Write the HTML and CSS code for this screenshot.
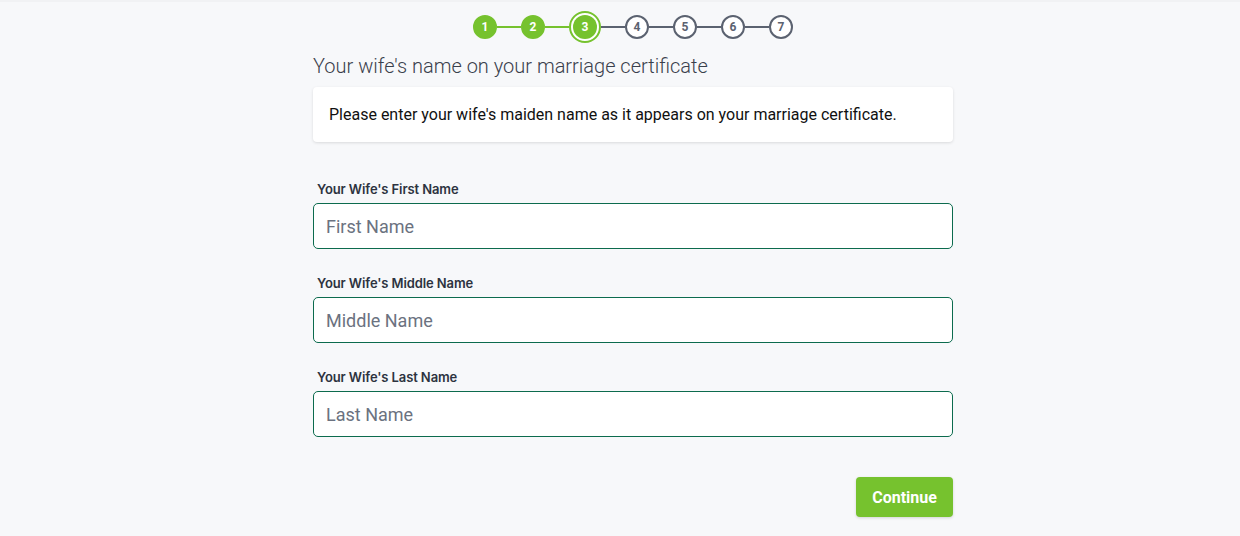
FILE: index.html
```html
<!DOCTYPE html>
<html lang="en">
<head>
    <meta charset="UTF-8">
    <meta name="viewport" content="width=device-width, initial-scale=1.0">
    <title>Marriage Certificate</title>
    <link rel="stylesheet" href="styles.css">
</head>
<body>
    <div class="page">
        <div class="wrap">
            <div class="stepper">
                <span class="step done">1</span>
                <span class="line done"></span>
                <span class="step done">2</span>
                <span class="line done"></span>
                <span class="step current"><span>3</span></span>
                <span class="line"></span>
                <span class="step">4</span>
                <span class="line"></span>
                <span class="step">5</span>
                <span class="line"></span>
                <span class="step">6</span>
                <span class="line"></span>
                <span class="step">7</span>
            </div>

            <h1 class="title">Your wife's name on your marriage certificate</h1>

            <div class="info">
                Please enter your wife's maiden name as it appears on your marriage certificate.
            </div>

            <form class="name-form">
                <div class="field">
                    <label for="first">Your Wife's First Name</label>
                    <input type="text" id="first" placeholder="First Name">
                </div>
                <div class="field">
                    <label for="middle">Your Wife's Middle Name</label>
                    <input type="text" id="middle" placeholder="Middle Name">
                </div>
                <div class="field">
                    <label for="last">Your Wife's Last Name</label>
                    <input type="text" id="last" placeholder="Last Name">
                </div>
                <div class="actions">
                    <button type="submit">Continue</button>
                </div>
            </form>
        </div>
    </div>
</body>
</html>
```

FILE: styles.css
```css
* {
    box-sizing: border-box;
}

body {
    margin: 0;
    padding: 0;
    background-color: #f7f8fa;
    font-family: Roboto, "Liberation Sans", Arial, sans-serif;
    color: #1a1a1a;
    height: 536px;
    overflow: hidden;
}

.page {
    display: flex;
    justify-content: center;
    padding-left: 26px;
    border-top: 2px solid #f1f2f4;
}

.wrap {
    width: 640px;
}

.stepper {
    display: flex;
    align-items: center;
    justify-content: center;
    margin-top: 9px;
    height: 32px;
}

.step {
    width: 24px;
    height: 24px;
    border-radius: 50%;
    border: 2px solid #5b6270;
    background-color: #fff;
    color: #5b6270;
    font-size: 12px;
    font-weight: 700;
    display: flex;
    align-items: center;
    justify-content: center;
}

.step.done {
    background-color: #76c22e;
    border-color: #76c22e;
    color: #fff;
}

.step.current {
    width: 32px;
    height: 32px;
    border: 2px solid #76c22e;
    background-color: #fff;
}

.step.current span {
    width: 24px;
    height: 24px;
    border-radius: 50%;
    background-color: #76c22e;
    color: #fff;
    display: flex;
    align-items: center;
    justify-content: center;
}

.line {
    width: 24px;
    height: 2px;
    background-color: #5b6270;
}

.line.done {
    background-color: #76c22e;
}

.title {
    margin: 11px 0 9px;
    font-size: 20px;
    line-height: 24px;
    font-weight: 300;
    color: #3a404c;
}

.info {
    background-color: #fff;
    border-radius: 4px;
    box-shadow: 0 1px 3px rgba(0, 0, 0, 0.12);
    padding: 16px;
    font-size: 16px;
    line-height: 23px;
    color: #111;
}

.name-form {
    margin-top: 39px;
}

.field {
    margin-bottom: 26px;
}

.field label {
    display: block;
    font-family: Inter, Roboto, sans-serif;
    font-size: 13px;
    line-height: 16px;
    font-weight: 600;
    letter-spacing: -0.1px;
    color: #2d3340;
    padding-left: 4px;
    margin-bottom: 6px;
}

.field input {
    display: block;
    width: 100%;
    height: 46px;
    padding: 0 12px;
    border: 1px solid #0c6b4e;
    border-radius: 5px;
    background-color: #fff;
    font-family: Roboto, sans-serif;
    font-size: 18px;
    color: #1a1a1a;
    outline: none;
}

.field input::placeholder {
    color: #6b7280;
}

.actions {
    display: flex;
    justify-content: flex-end;
    margin-top: 40px;
}

button {
    width: 97px;
    height: 40px;
    background-color: #76c22e;
    color: #fff;
    font-family: Roboto, sans-serif;
    font-size: 16px;
    font-weight: 700;
    border: none;
    border-radius: 4px;
    box-shadow: 0 1px 3px rgba(0, 0, 0, 0.15);
    cursor: pointer;
}

button:hover {
    background-color: #68ad27;
}
```
